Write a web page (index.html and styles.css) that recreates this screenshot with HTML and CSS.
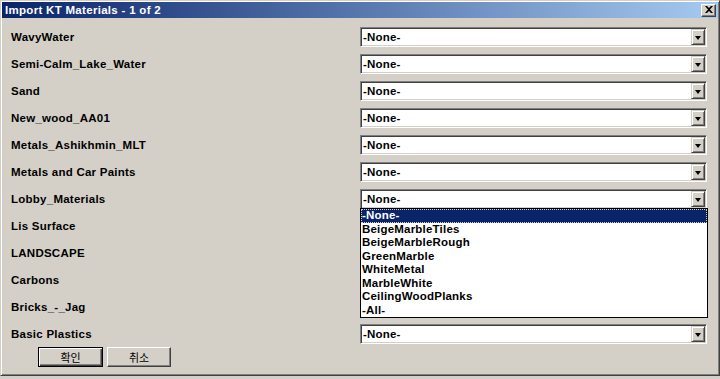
FILE: index.html
```html
<!DOCTYPE html>
<html>
<head>
<meta charset="utf-8">
<link rel="stylesheet" href="styles.css">
</head>
<body>
<div class="window">
  <div class="titlebar">
    <span class="title">Import KT Materials - 1 of 2</span>
    <span class="close">
      <svg width="8" height="7" viewBox="0 0 8 7"><path d="M0 0h2l2 2 2-2h2L5 3.5 8 7H6L4 5 2 7H0l3-3.5z" fill="#000"/></svg>
    </span>
  </div>
  <div class="rows">
    <div class="label">WavyWater</div>
    <div class="combo"><span class="value">-None-</span><span class="arrow"><i></i></span></div>
    <div class="label">Semi-Calm_Lake_Water</div>
    <div class="combo"><span class="value">-None-</span><span class="arrow"><i></i></span></div>
    <div class="label">Sand</div>
    <div class="combo"><span class="value">-None-</span><span class="arrow"><i></i></span></div>
    <div class="label">New_wood_AA01</div>
    <div class="combo"><span class="value">-None-</span><span class="arrow"><i></i></span></div>
    <div class="label">Metals_Ashikhmin_MLT</div>
    <div class="combo"><span class="value">-None-</span><span class="arrow"><i></i></span></div>
    <div class="label">Metals and Car Paints</div>
    <div class="combo"><span class="value">-None-</span><span class="arrow"><i></i></span></div>
    <div class="label">Lobby_Materials</div>
    <div class="combo open"><span class="value">-None-</span><span class="arrow"><i></i></span>
      <ul class="list">
        <li class="sel">-None-</li>
        <li>BeigeMarbleTiles</li>
        <li>BeigeMarbleRough</li>
        <li>GreenMarble</li>
        <li>WhiteMetal</li>
        <li>MarbleWhite</li>
        <li>CeilingWoodPlanks</li>
        <li>-All-</li>
      </ul>
    </div>
    <div class="label">Lis Surface</div>
    <div class="hidden-slot"></div>
    <div class="label">LANDSCAPE</div>
    <div class="hidden-slot"></div>
    <div class="label">Carbons</div>
    <div class="hidden-slot"></div>
    <div class="label">Bricks_-_Jag</div>
    <div class="hidden-slot"></div>
    <div class="label">Basic Plastics</div>
    <div class="combo"><span class="value">-None-</span><span class="arrow"><i></i></span></div>
  </div>
  <div class="buttons">
    <button class="btn default">확인</button>
    <button class="btn">취소</button>
  </div>
</div>
</body>
</html>
```
FILE: styles.css
```css
html, body {
  margin: 0;
  padding: 0;
  background: #d4d0c8;
}
body {
  width: 720px;
  height: 379px;
  overflow: hidden;
  font-family: "Liberation Sans", Arial, "Noto Sans CJK KR", sans-serif;
  font-size: 11.5px;
  font-weight: bold;
  color: #000;
}
.window {
  box-sizing: border-box;
  width: 720px;
  height: 376px;
  background: #d4d0c8;
  border: 1px solid;
  border-color: #d4d0c8 #404040 #404040 #d4d0c8;
  box-shadow: inset 1px 1px #ffffff, inset -1px -1px #808080;
  padding: 1px;
  display: flex;
  flex-direction: column;
}
.titlebar {
  height: 16px;
  background: linear-gradient(to right, #0a246a, #a6caf0);
  display: flex;
  align-items: center;
  justify-content: space-between;
  padding: 0 2px 0 3px;
}
.title {
  color: #fff;
  font-size: 11.5px;
  font-weight: bold;
  letter-spacing: 0.3px;
}
.close {
  box-sizing: border-box;
  width: 15px;
  height: 13px;
  background: #d4d0c8;
  border: 1px solid;
  border-color: #ffffff #404040 #404040 #ffffff;
  box-shadow: inset -1px -1px #808080;
  display: flex;
  align-items: center;
  justify-content: center;
  padding-bottom: 1px;
}
.close svg { display: block; }
.rows {
  display: grid;
  grid-template-columns: 358px 347px;
  grid-auto-rows: 20px;
  row-gap: 7px;
  padding-top: 9px;
}
.label {
  padding-left: 9px;
  display: flex;
  align-items: center;
  white-space: nowrap;
  letter-spacing: 0.25px;
}
.hidden-slot {
  height: 20px;
}
.combo {
  position: relative;
  box-sizing: border-box;
  height: 20px;
  background: #fff;
  border: 1px solid;
  border-color: #808080 #ffffff #ffffff #808080;
  box-shadow: inset 1px 1px #404040, inset -1px -1px #d4d0c8;
  padding: 1px;
  display: flex;
  align-items: stretch;
}
.value {
  flex: 1;
  display: flex;
  align-items: center;
  padding-left: 1px;
  letter-spacing: 0.2px;
}
.arrow {
  box-sizing: border-box;
  width: 14px;
  background: #d4d0c8;
  border: 1px solid;
  border-color: #d4d0c8 #404040 #404040 #d4d0c8;
  box-shadow: inset 1px 1px #ffffff, inset -1px -1px #808080;
  display: flex;
  align-items: center;
  justify-content: center;
}
.arrow i {
  display: block;
  width: 0;
  height: 0;
  border-left: 3.5px solid transparent;
  border-right: 3.5px solid transparent;
  border-top: 4px solid #000;
  margin-top: 1px;
}
.list {
  position: absolute;
  top: 18px;
  left: -1px;
  width: 348px;
  box-sizing: border-box;
  margin: 0;
  padding: 0;
  list-style: none;
  background: #fff;
  border: 1px solid #000;
  z-index: 5;
}
.list li {
  height: 13.5px;
  line-height: 13.5px;
  padding-left: 1px;
  white-space: nowrap;
  letter-spacing: 0.2px;
}
.list li.sel {
  background: #0a246a;
  color: #fff;
  outline: 1px dotted #d4d0c8;
  outline-offset: -1px;
}
.buttons {
  display: flex;
  gap: 4px;
  padding-left: 36px;
  margin-top: 3px;
}
.btn {
  box-sizing: border-box;
  width: 64px;
  height: 20px;
  background: #d4d0c8;
  font-family: "Noto Sans CJK KR", "Liberation Sans", sans-serif;
  font-size: 11px;
  font-weight: normal;
  color: #000;
  border: 1px solid;
  border-color: #ffffff #404040 #404040 #ffffff;
  box-shadow: inset -1px -1px #808080;
  padding: 0;
  line-height: 16px;
}
.btn.default {
  width: 65px;
  border: 1px solid #000;
  box-shadow: inset 1px 1px #ffffff, inset -1px -1px #404040, inset -2px -2px #808080;
}
```
